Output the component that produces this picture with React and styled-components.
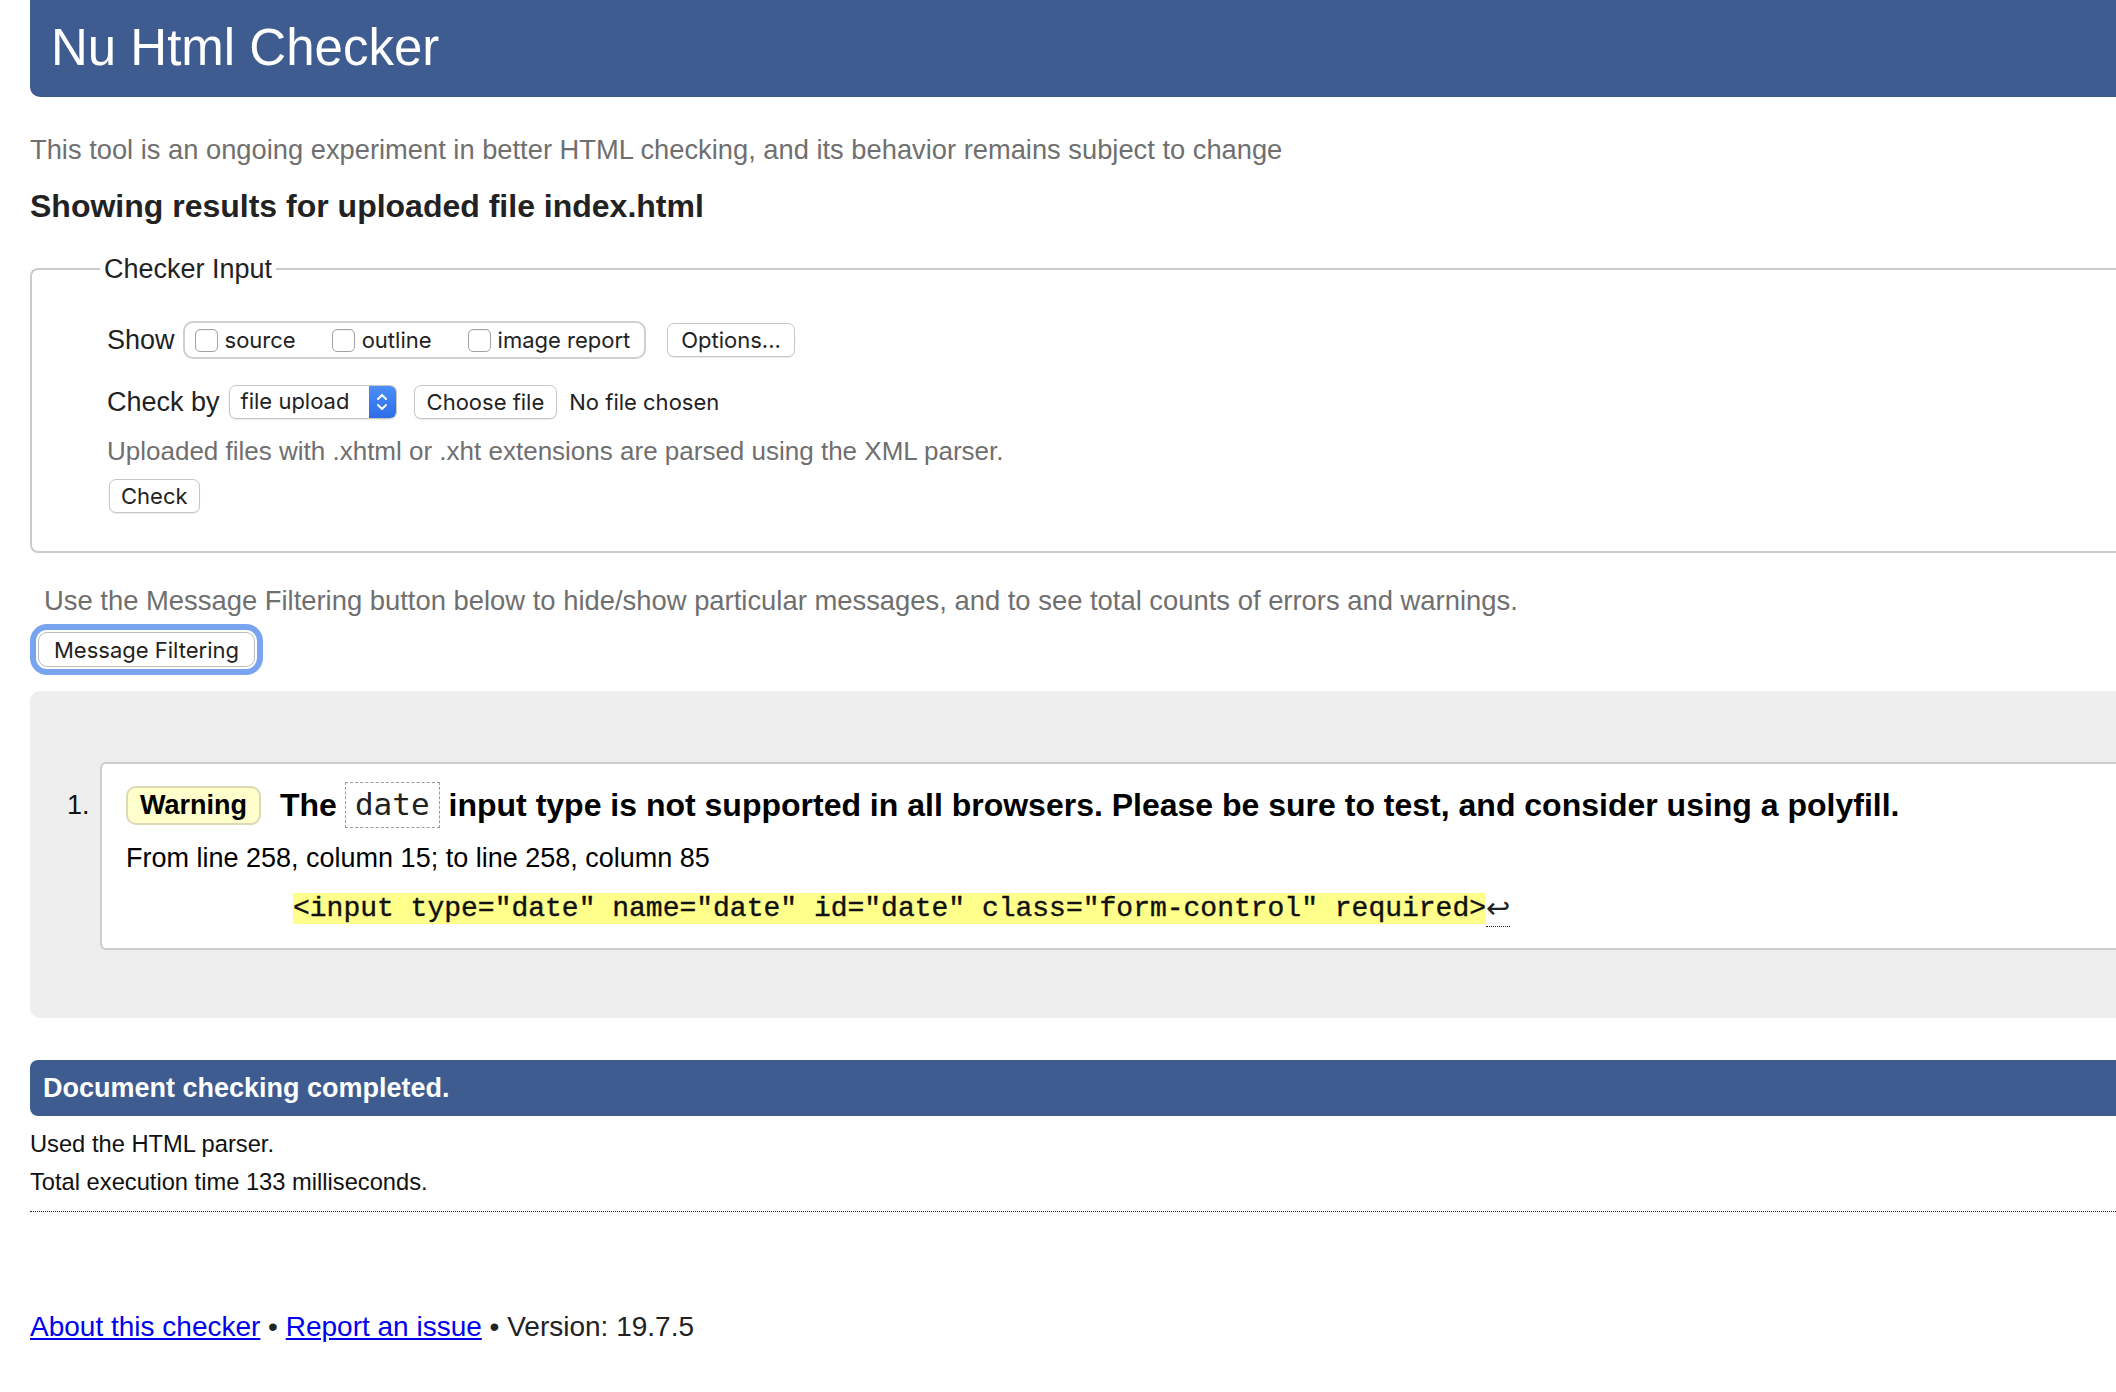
import React from 'react'
import styled, { createGlobalStyle } from 'styled-components'

const blue = '#3e5c90'
const grayText = '#6f6f6f'
const ui = '"Inter", "Noto Sans", sans-serif'

const GlobalStyle = createGlobalStyle`
  html, body {
    margin: 0;
    padding: 0;
    background: #fff;
  }
  body {
    overflow: hidden;
    font-family: "Liberation Sans", Arial, Helvetica, sans-serif;
    color: #222;
  }
`

const Page = styled.div`
  padding-left: 30px;
  margin-right: -24px;
`

const Header = styled.header`
  height: 97px;
  background: ${blue};
  border-radius: 0 0 0 10px;
  padding-left: 21px;
`

const Title = styled.h1`
  margin: 0;
  font-size: 51px;
  font-weight: normal;
  line-height: 95px;
  color: #fff;
`

const Intro = styled.p`
  margin: 37px 0 0;
  font-size: 27.3px;
  line-height: 32px;
  color: ${grayText};
`

const ResultsFor = styled.h2`
  margin: 21px 0 0;
  font-size: 32px;
  line-height: 38px;
  font-weight: bold;
  color: #222;
`

const InputBox = styled.fieldset`
  margin: 28px 0 0;
  padding: 0 0 38px 75px;
  border: 2px solid #cbcbcb;
  border-right: none;
  border-radius: 8px 0 0 8px;
  min-width: 0;
`

const Legend = styled.legend`
  margin-left: -7px;
  padding: 0 4px;
  font-size: 27px;
  line-height: 32px;
  color: #222;
`

const Row = styled.div`
  display: flex;
  align-items: center;
  height: ${p => p.$h}px;
  margin-top: ${p => p.$top}px;
`

const Label = styled.span`
  font-size: 27px;
  color: #222;
  margin-right: ${p => p.$gap}px;
`

const Group = styled.div`
  display: flex;
  align-items: center;
  box-sizing: border-box;
  height: 38px;
  padding: 0 14px 0 10px;
  border: 2px solid #cfcfcf;
  border-radius: 10px;
`

const Option = styled.label`
  display: flex;
  align-items: center;
  gap: 7px;
  margin-right: ${p => (p.$last ? 0 : 36)}px;
  font-family: ${ui};
  font-size: 22px;
  color: #222;
`

const Box = styled.span`
  box-sizing: border-box;
  width: 23px;
  height: 23px;
  border: 1.5px solid #a2a2a2;
  border-radius: 5px;
  background: #fff;
  box-shadow: inset 0 1px 1px rgba(0, 0, 0, 0.06);
`

const Button = styled.button`
  box-sizing: border-box;
  height: 34px;
  margin-left: ${p => p.$left || 0}px;
  padding: 0 ${p => p.$pad || 13}px;
  border: 1.5px solid #c6c6c6;
  border-radius: 7px;
  background: #fff;
  box-shadow: 0 1px 1px rgba(0, 0, 0, 0.08);
  font-family: ${ui};
  font-size: 22px;
  color: #222;
`

const Select = styled.div`
  box-sizing: border-box;
  display: flex;
  width: 168px;
  height: 34px;
  border: 1.5px solid #c6c6c6;
  border-radius: 7px;
  background: #fff;
  box-shadow: 0 1px 1px rgba(0, 0, 0, 0.08);
  overflow: hidden;
`

const SelectText = styled.span`
  flex: 1;
  padding-left: 11px;
  font-family: ${ui};
  font-size: 22px;
  line-height: 31px;
  color: #222;
`

const Stepper = styled.span`
  width: 27px;
  display: flex;
  align-items: center;
  justify-content: center;
  background: linear-gradient(#4b8ef7, #2c6de8);
`

const NoFile = styled.span`
  margin-left: 12px;
  font-family: ${ui};
  font-size: 22px;
  color: #222;
`

const Hint = styled.p`
  margin: ${p => p.$top}px 0 0;
  padding-left: ${p => p.$indent || 0}px;
  font-size: ${p => p.$size || 27}px;
  line-height: 32px;
  color: ${grayText};
`

const FilterButton = styled(Button)`
  display: block;
  margin-top: 15px;
  margin-left: 8px;
  height: 35px;
  padding: 0 15px;
  border-color: #bcbcbc;
  border-radius: 9px;
  box-shadow: 0 0 0 2px #fff, 0 0 0 8px #79a5f0;
`

const Results = styled.ol`
  display: flex;
  margin: 24px 0 0;
  padding: 71px 0 68px 37px;
  list-style: none;
  background: #eeeeee;
  border-radius: 10px 0 0 10px;
`

const Num = styled.span`
  width: 33px;
  margin-top: 27px;
  font-size: 27px;
  line-height: 32px;
  color: #111;
`

const Card = styled.li`
  flex: 1;
  padding: 18px 0 21px 24px;
  background: #fff;
  border: 2px solid #cdcdcd;
  border-right: none;
  border-radius: 6px 0 0 6px;
`

const Heading = styled.p`
  display: flex;
  align-items: center;
  height: 46px;
  margin: 0;
  white-space: nowrap;
  font-size: 32px;
  font-weight: bold;
  color: #000;
`

const Badge = styled.span`
  display: flex;
  align-items: center;
  box-sizing: border-box;
  height: 39px;
  margin-right: 19px;
  padding: 0 12px;
  background: #ffffcc;
  border: 2px solid #dcd9b4;
  border-radius: 10px;
  font-size: 27px;
`

const CodeWord = styled.code`
  box-sizing: border-box;
  height: 46px;
  margin: 0 9px 0 8px;
  padding: 0 9px;
  border: 1.5px dashed #9a9a9a;
  font-family: "DejaVu Sans Mono", Menlo, monospace;
  font-size: 31px;
  font-weight: normal;
  line-height: 43px;
  color: #222;
`

const Location = styled.p`
  margin: 14px 0 0;
  font-size: 27px;
  line-height: 32px;
  color: #000;
`

const Extract = styled.p`
  display: flex;
  align-items: flex-start;
  margin: 19px 0 0;
  padding-left: 167px;
  white-space: pre;
`

const Mark = styled.code`
  font-family: "Liberation Mono", "Courier New", monospace;
  font-size: 28px;
  line-height: 31px;
  background: #ffff8c;
  color: #111;
  -webkit-text-stroke: 0.4px #111;
`

const Lf = styled.span`
  height: 33px;
  font-family: "DejaVu Sans", sans-serif;
  font-size: 29px;
  line-height: 30px;
  color: #222;
  border-bottom: 1.5px dotted #222;
`

const Done = styled.div`
  display: flex;
  align-items: center;
  height: 56px;
  margin-top: 42px;
  padding-left: 13px;
  background: ${blue};
  border-radius: 8px 0 0 8px;
  font-size: 27px;
  font-weight: bold;
  color: #fff;
`

const Detail = styled.p`
  margin: ${p => p.$top}px 0 0;
  font-size: 23.7px;
  line-height: 28px;
  color: #111;
`

const Rule = styled.hr`
  margin: 15px 0 0;
  border: none;
  border-top: 1px dotted #222;
`

const Footer = styled.p`
  margin: 99px 0 0;
  font-size: 28px;
  line-height: 32px;
  color: #222;
`

const Link = styled.a`
  color: #0000ee;
  text-decoration: underline;
`

const Updown = () => (
  <svg width="14" height="22" viewBox="0 0 14 22" fill="none" stroke="#fff" strokeWidth="2" strokeLinecap="round" strokeLinejoin="round">
    <path d="M3 8 L7 4 L11 8" />
    <path d="M3 14 L7 18 L11 14" />
  </svg>
)

export default function App() {
  return (
    <Page>
      <GlobalStyle />
      <Header>
        <Title>Nu Html Checker</Title>
      </Header>
      <Intro>This tool is an ongoing experiment in better HTML checking, and its behavior remains subject to change</Intro>
      <ResultsFor>Showing results for uploaded file index.html</ResultsFor>

      <InputBox>
        <Legend>Checker Input</Legend>
        <Row $h={40} $top={35}>
          <Label $gap={8}>Show</Label>
          <Group>
            <Option><Box />source</Option>
            <Option><Box />outline</Option>
            <Option $last><Box />image report</Option>
          </Group>
          <Button $left={21}>Options...</Button>
        </Row>
        <Row $h={36} $top={24}>
          <Label $gap={9}>Check by</Label>
          <Select>
            <SelectText>file upload</SelectText>
            <Stepper><Updown /></Stepper>
          </Select>
          <Button $left={17} $pad={12}>Choose file</Button>
          <NoFile>No file chosen</NoFile>
        </Row>
        <Hint $top={15} $size={26}>Uploaded files with .xhtml or .xht extensions are parsed using the XML parser.</Hint>
        <Row $h={34} $top={12}>
          <Button $left={2} $pad={11}>Check</Button>
        </Row>
      </InputBox>

      <Hint $top={32} $indent={14} $size={27.4}>Use the Message Filtering button below to hide/show particular messages, and to see total counts of errors and warnings.</Hint>
      <FilterButton>Message Filtering</FilterButton>

      <Results>
        <Num>1.</Num>
        <Card>
          <Heading>
            <Badge>Warning</Badge>
            The<CodeWord>date</CodeWord>input type is not supported in all browsers. Please be sure to test, and consider using a polyfill.
          </Heading>
          <Location>From line 258, column 15; to line 258, column 85</Location>
          <Extract>
            <Mark>{'<input type="date" name="date" id="date" class="form-control" required>'}</Mark>
            <Lf>↩</Lf>
          </Extract>
        </Card>
      </Results>

      <Done>Document checking completed.</Done>
      <Detail $top={14}>Used the HTML parser.</Detail>
      <Detail $top={10}>Total execution time 133 milliseconds.</Detail>
      <Rule />
      <Footer>
        <Link href="#">About this checker</Link> • <Link href="#">Report an issue</Link> • Version: 19.7.5
      </Footer>
    </Page>
  )
}
